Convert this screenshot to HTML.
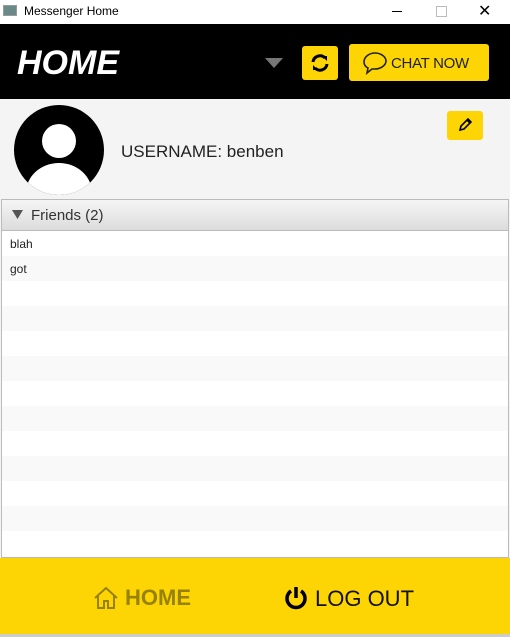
<!DOCTYPE html><html><head><style>
body{margin:0;width:510px;height:637px;overflow:hidden;font-family:"Liberation Sans",sans-serif;background:#f4f4f4;position:relative}
.a{position:absolute}
</style></head><body>
<div class="a" style="left:0;top:0;width:510px;height:24px;background:#fff"></div>
<div class="a" style="left:3px;top:5px;width:14px;height:11px;background:#6a8a8a;border:1px solid #999;box-sizing:border-box"></div>
<div class="a" style="left:24px;top:4px;font-size:12px;color:#000">Messenger Home</div>
<div class="a" style="left:392px;top:11px;width:10px;height:1px;background:#000"></div>
<div class="a" style="left:436px;top:6px;width:9px;height:9px;border:1px solid #bbb"></div>
<div class="a" style="left:478px;top:1px;font-size:16px;color:#000">✕</div>
<div class="a" style="left:0;top:24px;width:510px;height:75px;background:#000"></div>
<div class="a" style="left:17px;top:44px;font-size:34px;font-style:italic;font-weight:bold;color:#fff">HOME</div>
<svg class="a" style="left:265px;top:58px" width="18" height="10"><path d="M0 0h18L9 10z" fill="#777"/></svg>
<div class="a" style="left:302px;top:46px;width:36px;height:34px;background:#fed504;border-radius:3px"></div>
<svg class="a" style="left:310px;top:53px" width="20" height="20" viewBox="0 0 20 20"><path d="M3 9a7 7 0 0 1 12-4M17 11a7 7 0 0 1-12 4" stroke="#000" stroke-width="3" fill="none"/><path d="M12 3h5v5zM8 17H3v-5z" fill="#000"/></svg>
<div class="a" style="left:349px;top:44px;width:140px;height:37px;background:#fed504;border-radius:3px"></div>
<svg class="a" style="left:362px;top:51px" width="26" height="24" viewBox="0 0 26 24"><path d="M13 2C7 2 2 6 2 11c0 3 2 5 4 6l-1 5 5-4c1 0 2 0 3 0 6 0 11-4 11-8s-5-8-11-8z" fill="none" stroke="#222" stroke-width="1.6"/></svg>
<div class="a" style="left:391px;top:55px;font-size:15px;color:#222;letter-spacing:-0.3px">CHAT NOW</div>
<svg class="a" style="left:14px;top:105px" width="90" height="90"><defs><clipPath id="c"><circle cx="45" cy="45" r="45"/></clipPath></defs><circle cx="45" cy="45" r="45" fill="#000"/><g clip-path="url(#c)" fill="#fff"><circle cx="45" cy="36" r="17"/><ellipse cx="45" cy="88" rx="33" ry="30"/></g></svg>
<div class="a" style="left:121px;top:142px;font-size:17px;color:#222">USERNAME: benben</div>
<div class="a" style="left:447px;top:111px;width:36px;height:29px;background:#fed504;border-radius:3px"></div>
<svg class="a" style="left:457px;top:117px" width="16" height="16" viewBox="0 0 16 16"><path d="M3 13l1-4 7-7 3 3-7 7zM10 3l3 3" fill="none" stroke="#000" stroke-width="1.6"/></svg>
<div class="a" style="left:1px;top:199px;width:508px;height:359px;border:1px solid #bbb;box-sizing:border-box;background:repeating-linear-gradient(#fff 0 25px,#f9f9f9 25px 50px);background-position:0 31px"></div>
<div class="a" style="left:1px;top:199px;width:508px;height:32px;background:linear-gradient(#f5f5f5,#dcdcdc);border:1px solid #bbb;box-sizing:border-box"></div>
<svg class="a" style="left:12px;top:210px" width="11" height="9"><path d="M0 0h11L5.5 9z" fill="#555"/></svg>
<div class="a" style="left:31px;top:207px;font-size:15px;color:#333">Friends (2)</div>
<div class="a" style="left:10px;top:237px;font-size:12px;color:#222">blah</div>
<div class="a" style="left:10px;top:262px;font-size:12px;color:#222">got</div>
<div class="a" style="left:0;top:558px;width:510px;height:76px;background:#fed504"></div>
<div class="a" style="left:0;top:634px;width:510px;height:3px;background:#ccc"></div>
<svg class="a" style="left:93px;top:586px" width="26" height="24" viewBox="0 0 26 24"><path d="M2 12L13 2l11 10M5 10v12h6v-7h4v7h6V10" fill="none" stroke="#978200" stroke-width="2"/></svg>
<div class="a" style="left:125px;top:585px;font-size:22px;font-weight:bold;color:#978200">HOME</div>
<svg class="a" style="left:283px;top:585px" width="26" height="26" viewBox="0 0 26 26"><path d="M8 6a9 9 0 1 0 10 0" fill="none" stroke="#000" stroke-width="3.5"/><path d="M13 2v11" stroke="#000" stroke-width="3.5"/></svg>
<div class="a" style="left:315px;top:586px;font-size:22px;color:#111">LOG OUT</div>
</body></html>
